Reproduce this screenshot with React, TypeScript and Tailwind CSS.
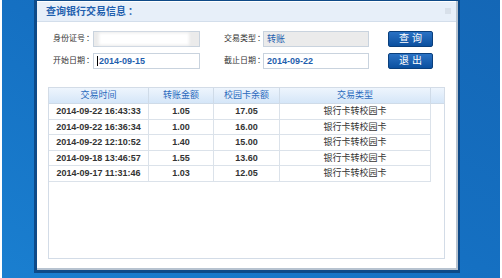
import React from 'react';

const rows = [
  { time: '2014-09-22 16:43:33', amount: '1.05', balance: '17.05', type: '银行卡转校园卡' },
  { time: '2014-09-22 16:36:34', amount: '1.00', balance: '16.00', type: '银行卡转校园卡' },
  { time: '2014-09-22 12:10:52', amount: '1.40', balance: '15.00', type: '银行卡转校园卡' },
  { time: '2014-09-18 13:46:57', amount: '1.55', balance: '13.60', type: '银行卡转校园卡' },
  { time: '2014-09-17 11:31:46', amount: '1.03', balance: '12.05', type: '银行卡转校园卡' },
];

const font = "font-['Liberation_Sans','Noto_Sans_CJK_SC',sans-serif]";

const Label: React.FC<{ text: string; width: string }> = ({ text, width }) => (
  <div className={`${width} shrink-0 whitespace-nowrap text-[8px] leading-[16px] text-[#333]`}>
    {text}
    <span className="ml-[1px]">：</span>
  </div>
);

const Button: React.FC<{ text: string }> = ({ text }) => (
  <button className="h-[16px] w-[45px] rounded-[2px] border border-[#0a3f7c] bg-gradient-to-b from-[#2a72c4] to-[#0a509f] pl-[3px] text-[10px] leading-[14px] tracking-[3px] text-white">
    {text}
  </button>
);

const App: React.FC = () => {
  return (
    <div
      className={`flex h-[278px] w-[502px] overflow-hidden border-x-2 border-white bg-gradient-to-tr from-[#1a7fd0] via-[#1570c2] to-[#1467b6] pl-[32px] ${font}`}
    >
      {/* dialog */}
      <div className="h-[273px] w-[426px] bg-[#0e4a88] pt-[1px] pl-[3px] pr-[2px] pb-[3px]">
        <div className="flex h-full flex-col border-r-2 border-b-2 border-[#b7c3d0] bg-white">
          {/* title bar */}
          <div className="flex h-[21px] shrink-0 items-center justify-between border-t border-white border-b border-b-[#d3deeb] bg-[#e7eff9] pl-[9px] pr-[5px]">
            <span className="text-[10px] font-bold text-[#1f5fae]">
              查询银行交易信息<span className="ml-[2px]">：</span>
            </span>
            <span className="mt-[-2px] h-[6px] w-[6px] bg-[#d8e0ea]" />
          </div>

          {/* form */}
          <div className="flex flex-col gap-[6px] pt-[9px] pl-[16px]">
            <div className="flex h-[16px] items-center">
              <Label text="身份证号" width="w-[40px]" />
              <div className="relative h-[16px] w-[107px] border border-[#c9d3de] bg-[#ebebeb]">
                <div className="absolute left-[5px] top-[1px] h-[12px] w-[90px] bg-white blur-[1.5px]" />
              </div>
              <div className="w-[24px]" />
              <Label text="交易类型" width="w-[39px]" />
              <div className="h-[16px] w-[106px] border border-[#c9d3de] bg-[#ebebeb] pl-[3px] text-[9px] leading-[14px] text-[#1f5fae]">
                转账
              </div>
              <div className="w-[19px]" />
              <Button text="查询" />
            </div>
            <div className="flex h-[16px] items-center">
              <Label text="开始日期" width="w-[40px]" />
              <div className="flex h-[16px] w-[107px] items-center border border-[#c9d3de] bg-white pl-[3px] text-[9px] font-bold leading-[14px] text-[#1f5fae]">
                <span className="mr-[1px] h-[10px] w-px bg-black" />
                2014-09-15
              </div>
              <div className="w-[24px]" />
              <Label text="截止日期" width="w-[39px]" />
              <div className="h-[16px] w-[106px] border border-[#c9d3de] bg-white pl-[3px] text-[9px] font-bold leading-[14px] text-[#1f5fae]">
                2014-09-22
              </div>
              <div className="w-[19px]" />
              <Button text="退出" />
            </div>
          </div>

          {/* table panel */}
          <div className="mt-[18px] ml-[11px] h-[172px] w-[397px] border border-[#d3dce7] bg-white">
            <div className="flex h-[16px] border-b border-[#cfdbe8] bg-gradient-to-b from-[#eef5fd] to-[#d5e6f8] text-[9px] leading-[15px] text-[#2a6abd]">
              <div className="w-[100px] border-r border-[#cfdbe8] text-center">交易时间</div>
              <div className="w-[65px] border-r border-[#cfdbe8] text-center">转账金额</div>
              <div className="w-[66px] border-r border-[#cfdbe8] text-center">校园卡余额</div>
              <div className="w-[151px] border-r border-[#cfdbe8] text-center">交易类型</div>
              <div className="flex-1" />
            </div>
            {rows.map((r, i) => (
              <div
                key={i}
                className="flex h-[15.5px] w-[382px] border-b border-r border-[#dbe2ea] text-[9px] leading-[14.5px] text-[#333]"
              >
                <div className="w-[100px] border-r border-[#dbe2ea] text-center font-bold">{r.time}</div>
                <div className="w-[65px] border-r border-[#dbe2ea] text-center font-bold">{r.amount}</div>
                <div className="w-[66px] border-r border-[#dbe2ea] text-center font-bold">{r.balance}</div>
                <div className="flex-1 text-center">{r.type}</div>
              </div>
            ))}
          </div>
        </div>
      </div>
    </div>
  );
};

export default App;
